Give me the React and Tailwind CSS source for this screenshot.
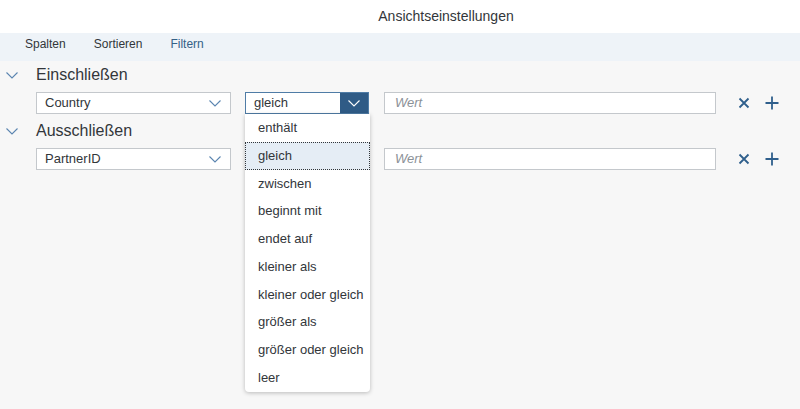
import React from "react";

const operators = [
  "enthält",
  "gleich",
  "zwischen",
  "beginnt mit",
  "endet auf",
  "kleiner als",
  "kleiner oder gleich",
  "größer als",
  "größer oder gleich",
  "leer",
];

const Chevron = ({ className = "", color = "#5b85b0" }) => (
  <svg className={className} width="12" height="7" viewBox="0 0 12 7" fill="none">
    <path d="M0.5 0.5 L6 6 L11.5 0.5" stroke={color} strokeWidth="1.1" />
  </svg>
);

const Remove = () => (
  <svg width="12" height="12" viewBox="0 0 12 12">
    <path d="M1.5 1.5 L10.5 10.5 M10.5 1.5 L1.5 10.5" stroke="#2f5f8c" strokeWidth="1.8" />
  </svg>
);

const Add = () => (
  <svg width="14" height="14" viewBox="0 0 14 14">
    <path d="M7 0.5 V13.5 M0.5 7 H13.5" stroke="#2f5f8c" strokeWidth="1.8" />
  </svg>
);

const FieldSelect = ({ value }) => (
  <div className="w-[195px] h-[22px] bg-white border border-[#c4c8cc] flex items-center justify-between pl-2 pr-[9px]">
    <span className="text-[13px] text-[#32363a]">{value}</span>
    <Chevron />
  </div>
);

const ValueInput = () => (
  <div className="ml-[15px] w-[332px] h-[22px] bg-white border border-[#c4c8cc] flex items-center pl-[10px]">
    <span className="text-[13px] italic text-[#8b9197]">Wert</span>
  </div>
);

const Actions = () => (
  <div className="flex items-center ml-[22px] gap-[15px]">
    <Remove />
    <Add />
  </div>
);

const GroupHeader = ({ title }) => (
  <div className="flex items-center h-[26px] mt-[4px] first:mt-0">
    <div className="w-[36px] flex pl-[6px]">
      <Chevron />
    </div>
    <span className="text-[16px] text-[#32363a]">{title}</span>
  </div>
);

export default function App() {
  return (
    <div
      className="w-full h-[409px] overflow-hidden bg-[#f7f7f7]"
      style={{ fontFamily: '"Liberation Sans", Arial, sans-serif' }}
    >
      <div className="h-[33px] bg-white flex items-center justify-center pl-[92px]">
        <span className="text-[14px] text-[#32363a]">Ansichtseinstellungen</span>
      </div>

      <div className="h-[28px] bg-[#eef3f8] flex items-start pt-[2px] pl-[25px] gap-[28px] text-[12px]">
        <span className="text-[#32363a]">Spalten</span>
        <span className="text-[#32363a]">Sortieren</span>
        <span className="text-[#346187]">Filtern</span>
      </div>

      <div className="pt-[1px]">
        <GroupHeader title="Einschließen" />
        <div className="flex items-center mt-[4px] pl-[36px]">
          <FieldSelect value="Country" />
          <div className="relative ml-[14px]">
            <div className="w-[124px] h-[22px] bg-white border border-[#4f7ca6] flex items-center">
              <span className="flex-1 pl-2 text-[13px] text-[#32363a]">gleich</span>
              <div className="w-[28px] h-full bg-[#2f5b86] flex items-center justify-center">
                <Chevron color="#ffffff" />
              </div>
            </div>
            <div className="absolute left-0 top-full w-[125px] bg-white rounded-b-[4px] shadow-[0_1px_4px_rgba(0,0,0,0.25)] z-10">
              {operators.map((op) => (
                <div
                  key={op}
                  className={
                    op === "gleich"
                      ? "h-[27.75px] flex items-center pl-[12px] bg-[#e5edf5] border border-dotted border-[#32363a] text-[13px] text-[#32363a]"
                      : "h-[27.75px] flex items-center pl-[13px] text-[13px] text-[#32363a]"
                  }
                >
                  {op}
                </div>
              ))}
            </div>
          </div>
          <ValueInput />
          <Actions />
        </div>

        <GroupHeader title="Ausschließen" />
        <div className="flex items-center mt-[4px] pl-[36px]">
          <FieldSelect value="PartnerID" />
          <div className="w-[124px] ml-[14px]" />
          <ValueInput />
          <Actions />
        </div>
      </div>
    </div>
  );
}
